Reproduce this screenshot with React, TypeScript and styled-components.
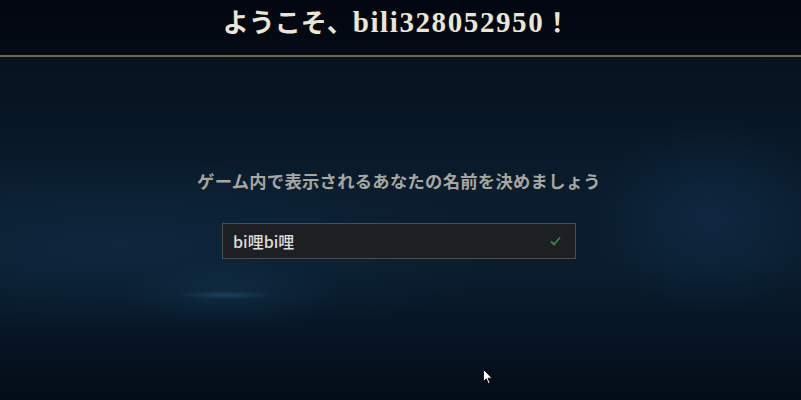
import React from "react";
import styled, { createGlobalStyle } from "styled-components";

const Global = createGlobalStyle`
  html, body { margin: 0; padding: 0; background: #03080f; }
  body { width: 801px; height: 400px; overflow: hidden; }
`;

const Page = styled.div`
  position: relative;
  width: 801px;
  height: 400px;
  display: flex;
  flex-direction: column;
  overflow: hidden;
  background: #03080f;
`;

const Header = styled.header`
  height: 57px;
  flex: 0 0 auto;
  display: flex;
  justify-content: center;
  align-items: flex-start;
  padding-right: 8px;
  background: linear-gradient(180deg, #020610 0%, #040b15 100%);
  border-bottom: 2px solid #6e6852;
  box-sizing: border-box;
`;

const Title = styled.h1`
  margin: 3px 0 0 0;
  font-family: "Liberation Serif", "Noto Sans CJK JP", serif;
  font-weight: 700;
  font-size: 26px;
  line-height: 38px;
  color: #ebe5d2;
  white-space: nowrap;
`;

const Name = styled.span`
  font-size: 29px;
  letter-spacing: 1.6px;
`;

const Stage = styled.main`
  flex: 1 1 auto;
  display: flex;
  flex-direction: column;
  align-items: center;
  padding-top: 114px;
  padding-right: 3px;
  background:
    radial-gradient(ellipse 60px 5px at 225px 238px, rgba(60, 120, 160, 0.3), transparent 80%),
    radial-gradient(ellipse 140px 40px at 230px 236px, rgba(30, 80, 115, 0.22), transparent 80%),
    radial-gradient(ellipse 150px 120px at 710px 160px, rgba(22, 62, 100, 0.35), transparent 80%),
    radial-gradient(ellipse 480px 110px at 120px 190px, rgba(18, 52, 80, 0.45), transparent 85%),
    linear-gradient(180deg, #06121f 0%, #0a1c2d 40%, #0a1d2e 60%, #061322 85%, #030c16 100%);
`;

const Prompt = styled.p`
  margin: 0;
  font-family: "Liberation Serif", "Noto Sans CJK JP", serif;
  font-weight: 700;
  font-size: 17.3px;
  line-height: 24px;
  color: #a7a69f;
  letter-spacing: 0.3px;
  white-space: nowrap;
`;

const Field = styled.div`
  margin-top: 28px;
  width: 354px;
  height: 36px;
  box-sizing: border-box;
  display: flex;
  align-items: center;
  justify-content: space-between;
  padding: 0 14px 0 10px;
  background: #1e1f23;
  border: 1px solid #4c4d4c;
`;

const FieldText = styled.span`
  font-family: "Noto Sans CJK SC", "Noto Sans", sans-serif;
  font-size: 16px;
  font-weight: 500;
  color: #dcdcd8;
`;

const Check = styled.svg`
  width: 11px;
  height: 10px;
`;

const Pointer = styled.svg`
  position: absolute;
  left: 483px;
  top: 369px;
  width: 10px;
  height: 16px;
`;

export default function App() {
  return (
    <Page>
      <Global />
      <Header>
        <Title>
          ようこそ、<Name>bili328052950</Name>！
        </Title>
      </Header>
      <Stage>
        <Prompt>ゲーム内で表示されるあなたの名前を決めましょう</Prompt>
        <Field>
          <FieldText>bi哩bi哩</FieldText>
          <Check viewBox="0 0 11 10">
            <path d="M1 5.5 L4 8.5 L10 1.5" fill="none" stroke="#2f8a4a" strokeWidth="1.8" />
          </Check>
        </Field>
      </Stage>
      <Pointer viewBox="0 0 10 16">
        <path d="M0.5 0.5 L0.5 12.5 L3.3 9.8 L5.3 14.5 L7 13.8 L5 9.2 L9 9.2 Z" fill="#ffffff" stroke="#000" strokeWidth="0.8" />
      </Pointer>
    </Page>
  );
}
